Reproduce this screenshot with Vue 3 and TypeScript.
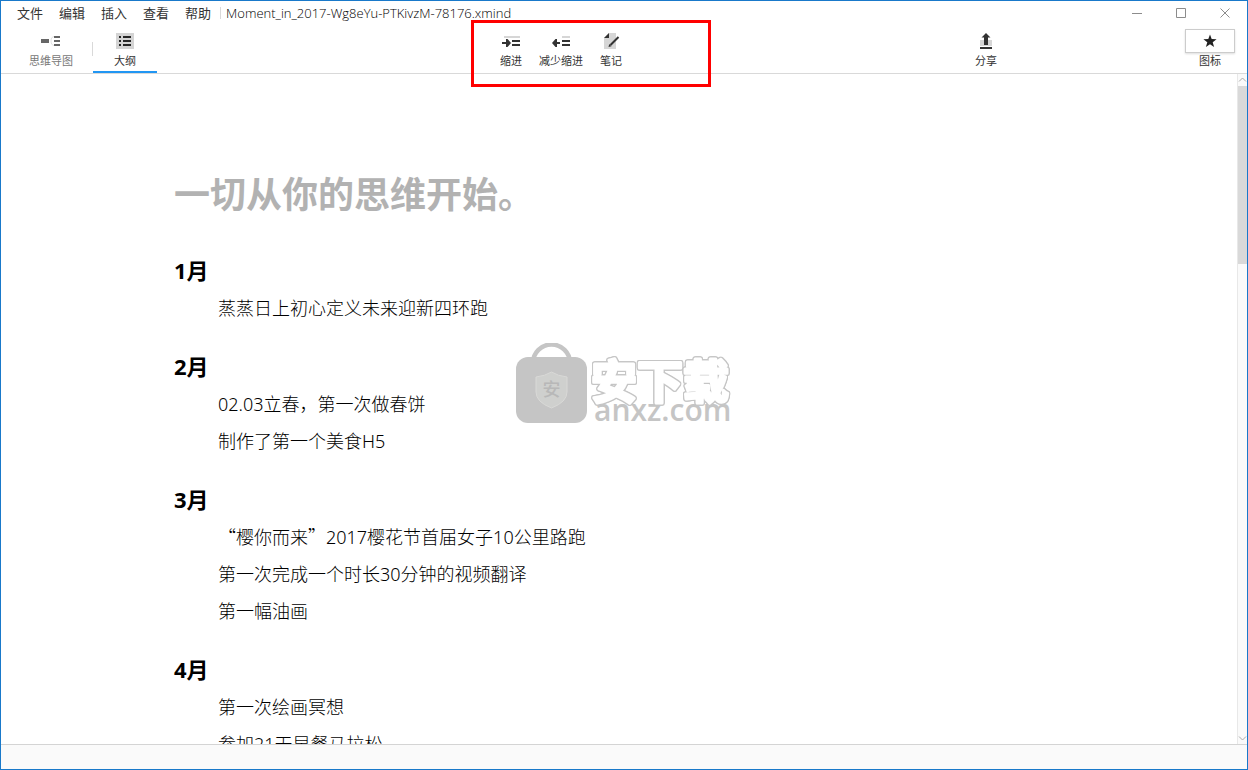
<script setup lang="ts">
interface Month {
  name: string
  items: string[]
}

const menus: string[] = ['文件', '编辑', '插入', '查看', '帮助']

const months: Month[] = [
  { name: '1月', items: ['蒸蒸日上初心定义未来迎新四环跑'] },
  { name: '2月', items: ['02.03立春，第一次做春饼', '制作了第一个美食H5'] },
  {
    name: '3月',
    items: ['“樱你而来”2017樱花节首届女子10公里路跑', '第一次完成一个时长30分钟的视频翻译', '第一幅油画'],
  },
  { name: '4月', items: ['第一次绘画冥想', '参加21天早餐马拉松'] },
]

// Curly quotes take the full-width CJK form, so they are split from the Latin digits.
const isQuote = (part: string): boolean => part === '“' || part === '”'
const parts = (text: string): string[] => text.split(/([“”])/).filter(Boolean)
</script>

<template>
  <div class="window">
    <header class="titlebar">
      <nav class="menus">
        <button v-for="menu in menus" :key="menu" type="button">{{ menu }}</button>
      </nav>
      <span class="filename">Moment_in_2017-Wg8eYu-PTKivzM-78176.xmind</span>
      <div class="controls">
        <button type="button" aria-label="最小化">
          <svg width="12" height="12" viewBox="0 0 12 12"><path d="M1 6.500h10" /></svg>
        </button>
        <button type="button" aria-label="最大化">
          <svg width="12" height="12" viewBox="0 0 12 12"><path d="M1.500 1.500h9v9h-9z" /></svg>
        </button>
        <button type="button" aria-label="关闭">
          <svg width="12" height="12" viewBox="0 0 12 12"><path d="M1.500 1.500l9 9M10.500 1.500l-9 9" /></svg>
        </button>
      </div>
    </header>

    <div class="toolbar">
      <div class="tabs">
        <button type="button" class="tool map">
          <svg width="20" height="16" viewBox="0 0 20 16">
            <path d="M14 3.500c-3 0-4 1.500-4 4.500s1 4.500 4 4.500" fill="none" stroke="#e2e2e2" />
            <path d="M0 6h8v4H0zM13 3h6v2h-6zM13 7h6v2h-6zM13 11h6v2h-6z" fill="#666" />
          </svg>
          <span>思维导图</span>
        </button>
        <button type="button" class="tool outline-tab">
          <svg width="18" height="16" viewBox="0 0 18 16">
            <path d="M0 0h18v16H0z" fill="#d4d4d4" />
            <path d="M3 3h2v2H3zM7 3h8v2H7zM3 7h2v2H3zM7 7h8v2H7zM3 11h2v2H3zM7 11h8v2H7z" fill="#262626" />
          </svg>
          <span>大纲</span>
        </button>
      </div>

      <div class="tools">
        <button type="button" class="tool">
          <svg width="18" height="16" viewBox="0 0 18 16">
            <path d="M2 3h16v2H2z" fill="#d6d6d6" />
            <path d="M10 7h8v2h-8zM10 11h8v2h-8zM0 9h4V6h1.500L9 10l-3.500 4H4v-3H0z" fill="#333" />
          </svg>
          <span>缩进</span>
        </button>
        <button type="button" class="tool">
          <svg width="18" height="16" viewBox="0 0 18 16">
            <path d="M10 3h8v2h-8z" fill="#d6d6d6" />
            <path d="M10 7h8v2h-8zM10 11h8v2h-8zM8 9H5V6H3.500L0 10l3.500 4H5v-3h3z" fill="#333" />
          </svg>
          <span>减少缩进</span>
        </button>
        <button type="button" class="tool">
          <svg width="18" height="16" viewBox="0 0 18 16">
            <path d="M7 0h7v16H2V5z" fill="#d6d6d6" />
            <path d="M7 0v5H2z" fill="#333" />
            <path d="M16.500 4L8.500 12" fill="none" stroke="#333" stroke-width="2" />
            <path d="M6.500 14l.8-3 2.200 2.200z" fill="#333" />
          </svg>
          <span>笔记</span>
        </button>
        <div class="highlight"></div>
      </div>

      <button type="button" class="tool share">
        <svg width="14" height="18" viewBox="0 0 14 18">
          <path d="M1 8h12v6H1z" fill="#d6d6d6" />
          <path d="M1 15h12v2H1zM7 1l4.500 4.500H9V13H5V5.500H2.500z" fill="#333" />
        </svg>
        <span>分享</span>
      </button>

      <button type="button" class="tool marker">
        <span class="marker-box">
          <svg width="14" height="14" viewBox="0 0 14 14">
            <path d="M7 .5l1.700 4.600 4.900.2-3.900 3 1.400 4.700L7 10.300 2.900 13l1.400-4.700-3.900-3 4.900-.2z" fill="#222" />
          </svg>
        </span>
        <span>图标</span>
      </button>
    </div>

    <main class="page">
      <article class="outline">
        <h1>一切从你的思维开始。</h1>
        <section v-for="month in months" :key="month.name">
          <h2>{{ month.name }}</h2>
          <ul>
            <li v-for="item in month.items" :key="item"><span v-for="(part, i) in parts(item)" :key="i" :class="{ quote: isQuote(part) }">{{ part }}</span></li>
          </ul>
        </section>
      </article>
      <div class="scrollbar">
        <svg width="9" height="12" viewBox="0 0 9 12"><path d="M1 7.500L4.500 4 8 7.500" /></svg>
        <div class="thumb"></div>
        <svg class="down" width="9" height="12" viewBox="0 0 9 12"><path d="M1 4.500L4.500 8 8 4.500" /></svg>
      </div>
    </main>

    <footer class="status"></footer>

    <div class="watermark">
      <svg width="74" height="82" viewBox="0 0 74 82">
        <path d="M17 20a18.500 18.500 0 0 1 37 0" fill="none" stroke="#c5c5c5" stroke-width="4.500" />
        <rect x="0" y="14" width="71" height="66" rx="12" fill="#c5c5c5" />
        <path d="M20 34q9-1 15.500-5 6.500 4 15.500 5v15q0 10-15.500 16Q20 59 20 49z" fill="#cfd0ce" stroke="#d9d9d7" />
        <text x="35.500" y="53" text-anchor="middle" class="seal">安</text>
      </svg>
      <div class="brand">
        <svg class="brand-name" width="144" height="50" viewBox="0 0 144 50">
          <text x="1" y="42">安下载</text>
        </svg>
        <span class="brand-site">anxz.com</span>
      </div>
    </div>
  </div>
</template>

<style>
body {
  margin: 0;
}
</style>

<style scoped>
.window {
  position: relative;
  display: flex;
  flex-direction: column;
  box-sizing: border-box;
  height: 100vh;
  overflow: hidden;
  border: 1px solid #1979ca;
  background: #fff;
  color: #000;
  font-family: "Noto Sans", "Noto Sans CJK SC", sans-serif;
}

button {
  padding: 0;
  border: 0;
  background: none;
  color: inherit;
  font: inherit;
}

.titlebar {
  display: flex;
  align-items: center;
  height: 24px;
  flex: none;
  color: #333;
  font-size: 13px;
  font-weight: 400;
  line-height: 20px;
}

.menus {
  display: flex;
  gap: 16px;
  padding: 0 9px 0 16px;
}

.filename {
  padding-left: 5px;
  border-left: 1px solid #d9d9d9;
  color: #000;
  font-family: "Open Sans", sans-serif;
  font-weight: 300;
  line-height: 12px;
}

.controls {
  display: flex;
  gap: 32px;
  margin-left: auto;
  padding-right: 16px;
}

.controls button {
  display: flex;
}

.controls path {
  fill: none;
  stroke: #8c8c8c;
}

.toolbar {
  display: flex;
  flex: none;
  height: 48px;
  border-bottom: 1px solid #d9d9d9;
  color: #333;
  font-size: 11px;
  font-weight: 400;
  line-height: 16px;
}

.tool {
  display: flex;
  flex-direction: column;
  align-items: center;
  justify-content: flex-end;
  width: 50px;
  height: 44px;
  gap: 4px;
  white-space: nowrap;
}

.tabs {
  display: flex;
  padding-left: 8px;
}

.tabs .map {
  width: 84px;
  color: #777;
}

.tabs .outline-tab {
  position: relative;
  width: 64px;
  height: 48px;
  padding-bottom: 2px;
  box-sizing: border-box;
  border-bottom: 2px solid #2196f3;
}

.outline-tab::before {
  position: absolute;
  top: 17px;
  left: -1px;
  width: 1px;
  height: 14px;
  background: #d9d9d9;
  content: "";
}

.tools {
  position: relative;
  display: flex;
  margin-left: 329px;
}

.highlight {
  position: absolute;
  z-index: 2;
  top: -5px;
  left: -15px;
  box-sizing: border-box;
  width: 240px;
  height: 67px;
  border: 3px solid #f00;
  pointer-events: none;
}

.share {
  margin-left: auto;
  gap: 3px;
}

.marker {
  margin: 0 12px 0 174px;
  gap: 0;
}

.marker-box {
  display: flex;
  align-items: center;
  justify-content: center;
  box-sizing: border-box;
  width: 50px;
  height: 24px;
  border: 1px solid #ccc;
  box-shadow: 0 1px 2px #ddd;
}

.page {
  display: flex;
  flex: 1;
  min-height: 0;
  overflow: hidden;
}

.outline {
  flex: 1;
  padding: 91px 40px 0 173px;
}

h1 {
  margin: 0 0 26px;
  color: #b2b2b2;
  font-size: 36px;
  font-weight: 700;
  line-height: 60px;
}

h2 {
  margin: 0;
  font-size: 22px;
  font-weight: 700;
  line-height: 39px;
}

ul {
  margin: 0 0 20px;
  padding: 0 0 0 44px;
  list-style: none;
}

li {
  font-size: 18px;
  font-weight: 300;
  line-height: 37px;
}

.quote {
  font-family: "Noto Sans CJK SC", sans-serif;
  line-height: 1;
}

.scrollbar {
  display: flex;
  flex-direction: column;
  width: 10px;
  box-sizing: border-box;
  border-left: 1px solid #e8e8e8;
  background: #fafafa;
}

.scrollbar path {
  fill: none;
  stroke: #aaa;
}

.thumb {
  height: 178px;
  background: #d9d9d9;
}

.down {
  margin-top: auto;
}

.status {
  height: 24px;
  flex: none;
  border-top: 1px solid #d4d4d4;
  background: #fafafa;
}

.watermark {
  position: absolute;
  top: 342px;
  left: 50%;
  display: flex;
  width: 218px;
  margin-left: -108px;
}

.seal {
  fill: #b8b8b8;
  font-family: "Noto Sans CJK SC", sans-serif;
  font-size: 18px;
  font-weight: 500;
}

.brand {
  display: flex;
  flex-direction: column;
  padding-top: 13px;
}

.brand-name {
  overflow: visible;
  fill: #fff;
  stroke: #fff;
  stroke-width: 3px;
  stroke-linejoin: round;
  font-family: "Noto Sans CJK SC", sans-serif;
  font-size: 46px;
  font-weight: 700;
  filter: drop-shadow(1px 0 #c5c5c5) drop-shadow(-1px 0 #c5c5c5) drop-shadow(0 1px #c5c5c5) drop-shadow(0 -1px #c5c5c5);
}

.brand-site {
  padding-left: 4px;
  color: #c5c5c5;
  font-family: "Open Sans", sans-serif;
  font-size: 30px;
  font-weight: 600;
  line-height: 8px;
}
</style>
